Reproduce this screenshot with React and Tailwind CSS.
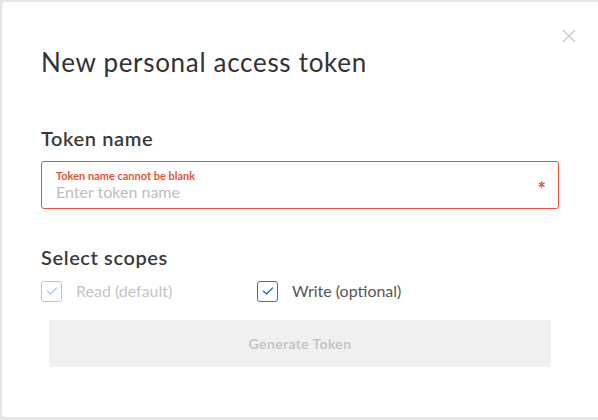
import React, { useState } from "react";

const Check = ({ className }) => (
  <svg viewBox="0 0 12 10" className={className} fill="none" stroke="currentColor" strokeWidth="1.4" strokeLinecap="round" strokeLinejoin="round">
    <path d="M1.5 5.2 L4.5 8 L10.5 2" />
  </svg>
);

const Checkbox = ({ checked, disabled, label, onChange }) => (
  <label className="flex items-center gap-[14px] cursor-pointer">
    <span
      className={
        "w-[21px] h-[21px] rounded-[3px] border flex items-center justify-center " +
        (disabled ? "border-[#a9ccf7] text-[#a9ccf7]" : "border-[#1f74e6] text-[#1f74e6]")
      }
      onClick={disabled ? undefined : onChange}
    >
      {checked && <Check className="w-[12px] h-[10px]" />}
    </span>
    <span className={"text-[16px] " + (disabled ? "text-[#c4c4c4]" : "text-[#555]")}>{label}</span>
  </label>
);

export default function App() {
  const [write, setWrite] = useState(true);

  return (
    <div className="w-[598px] h-[420px] bg-[#e6e6e6] pl-[2px] pt-[2px] overflow-hidden" style={{ fontFamily: "Lato, 'Open Sans', sans-serif" }}>
      <div className="w-[610px] h-[415px] bg-white rounded-[4px] pl-[39px] pr-[51px] pt-[42px] relative">
        <button className="absolute left-[560px] top-[27px] w-[14px] h-[14px] text-[#c8c8c8]">
          <svg viewBox="0 0 14 14" className="w-[14px] h-[14px]" stroke="currentColor" strokeWidth="1.2">
            <path d="M1 1 L13 13 M13 1 L1 13" />
          </svg>
        </button>

        {/* header */}
        <h1 className="text-[26px] leading-[36px] tracking-[0.7px] text-[#333] font-normal">New personal access token</h1>

        {/* token name */}
        <h2 className="mt-[46px] text-[20px] leading-[24px] tracking-[0.6px] font-semibold text-[#3a3a3a]">Token name</h2>

        <div className="mt-[11px] w-[518px] h-[48px] border border-[#e8542f] rounded-[3px] pl-[14px] pr-[12px] flex items-center">
          <div className="flex-1 flex flex-col">
            <span className="text-[11px] leading-[13px] font-bold text-[#e8542f]">Token name cannot be blank</span>
            <input
              className="text-[16px] leading-[20px] text-[#333] placeholder-[#bdbdbd] outline-none bg-transparent"
              placeholder="Enter token name"
            />
          </div>
          <span className="text-[#e8542f] text-[20px] font-bold leading-none pt-[8px]">*</span>
        </div>

        {/* scopes */}
        <h2 className="mt-[36px] text-[20px] leading-[24px] tracking-[0.6px] font-semibold text-[#3a3a3a]">Select scopes</h2>

        <div className="mt-[10px] flex items-center">
          <div className="w-[216px]">
            <Checkbox checked disabled label="Read (default)" />
          </div>
          <Checkbox checked={write} label="Write (optional)" onChange={() => setWrite(!write)} />
        </div>

        <button
          disabled
          className="mt-[17px] ml-[8px] w-[502px] h-[47px] rounded-[3px] bg-[#f0f0f0] text-[#c0c0c0] text-[14px] tracking-[0.4px] font-semibold"
        >
          Generate Token
        </button>
      </div>
    </div>
  );
}
